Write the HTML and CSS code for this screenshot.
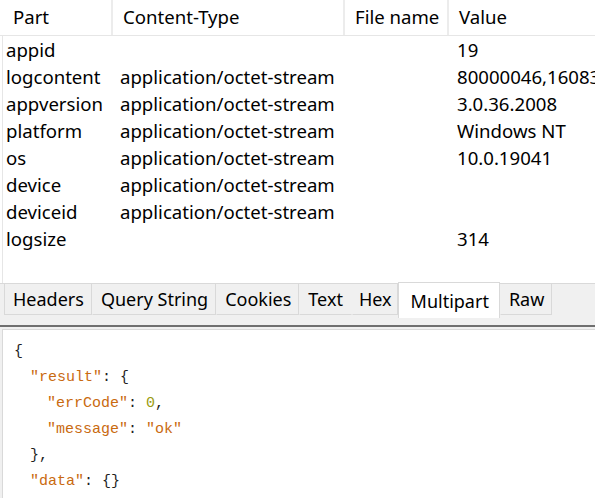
FILE: index.html
```html
<!DOCTYPE html>
<html>
<head>
<meta charset="utf-8">
<link rel="stylesheet" href="styles.css">
</head>
<body>
<div class="grid">
  <div class="row head">
    <div class="c c1">Part</div>
    <div class="c c2">Content-Type</div>
    <div class="c c3">File name</div>
    <div class="c c4">Value</div>
  </div>
  <div class="rows">
    <div class="row"><div class="c c1">appid</div><div class="c c2"></div><div class="c c3"></div><div class="c c4">19</div></div>
    <div class="row"><div class="c c1">logcontent</div><div class="c c2">application/octet-stream</div><div class="c c3"></div><div class="c c4">80000046,16083</div></div>
    <div class="row"><div class="c c1">appversion</div><div class="c c2">application/octet-stream</div><div class="c c3"></div><div class="c c4">3.0.36.2008</div></div>
    <div class="row"><div class="c c1">platform</div><div class="c c2">application/octet-stream</div><div class="c c3"></div><div class="c c4">Windows NT</div></div>
    <div class="row"><div class="c c1">os</div><div class="c c2">application/octet-stream</div><div class="c c3"></div><div class="c c4">10.0.19041</div></div>
    <div class="row"><div class="c c1">device</div><div class="c c2">application/octet-stream</div><div class="c c3"></div><div class="c c4"></div></div>
    <div class="row"><div class="c c1">deviceid</div><div class="c c2">application/octet-stream</div><div class="c c3"></div><div class="c c4"></div></div>
    <div class="row"><div class="c c1">logsize</div><div class="c c2"></div><div class="c c3"></div><div class="c c4">314</div></div>
  </div>
</div>
<div class="tabstrip">
  <div class="tab">Headers</div>
  <div class="tab">Query String</div>
  <div class="tab">Cookies</div>
  <div class="tab nodiv">Text</div>
  <div class="tab hex">Hex</div>
  <div class="tab active">Multipart</div>
  <div class="tab">Raw</div>
</div>
<div class="splitter"></div>
<div class="code"><div class="ln"><span class="p">{</span></div><div class="ln i1"><span class="k">"result"</span><span class="p">: {</span></div><div class="ln i2"><span class="k">"errCode"</span><span class="p">: </span><span class="n">0</span><span class="p">,</span></div><div class="ln i2"><span class="k">"message"</span><span class="p">: </span><span class="k">"ok"</span></div><div class="ln i1"><span class="p">},</span></div><div class="ln i1"><span class="k">"data"</span><span class="p">: {}</span></div></div>
</body>
</html>
```
FILE: styles.css
```css
html, body {
  margin: 0;
  padding: 0;
  background: #f0f0f0;
  overflow: hidden;
}
body {
  width: 595px;
  height: 498px;
  font-family: "Noto Sans", "Liberation Sans", sans-serif;
  color: #000;
}
.grid {
  height: 283px;
  background: #fff;
  border-bottom: 1px solid #d9d9d9;
  overflow: hidden;
}
.row {
  display: grid;
  grid-template-columns: 113px 232px 104px 146px;
  height: 27px;
  font-size: 18.6px;
  line-height: 27px;
  white-space: nowrap;
}
.c {
  overflow: hidden;
}
.head {
  height: 35px;
  line-height: 34px;
  border-bottom: 1px solid #e6e6e6;
}
.head .c {
  padding-left: 10px;
  border-right: 2px solid #ececec;
}
.head .c1 {
  padding-left: 13px;
}
.head .c4 {
  border-right: none;
}
.rows {
  height: 247px;
  margin-left: 2px;
  border-left: 1px solid #e6e6e6;
}
.rows .row {
  grid-template-columns: 110px 232px 104px 146px;
}
.rows .c1 { padding-left: 3px; }
.rows .c2 { padding-left: 7px; }
.rows .c4 { padding-left: 8px; }

.tabstrip {
  display: flex;
  align-items: flex-start;
  height: 41px;
  padding-left: 4px;
  background: #f0f0f0;
}
.tab {
  height: 31px;
  line-height: 30px;
  font-size: 18px;
  padding: 0 7px 0 8px;
  border: 1px solid #d9d9d9;
  border-top: none;
  border-left-color: transparent;
  background: #f0f0f0;
  box-sizing: border-box;
  white-space: nowrap;
}
.tab:first-child {
  border-left-color: #d9d9d9;
}
.tab.nodiv {
  border-right-color: transparent;
  padding: 0 8px 0 8px;
}
.tab.hex {
  padding: 0 5px 0 6px;
}
.tab.active {
  margin-top: -2px;
  height: 36px;
  line-height: 37px;
  padding: 0 10px 0 12px;
  background: #fff;
  border: 1px solid #d9d9d9;
  border-bottom: none;
}
.splitter {
  height: 2px;
  background: #6f6f6f;
}
.code {
  margin: 2px 0 0 2px;
  height: 170px;
  box-sizing: border-box;
  background: #fff;
  border-top: 1px solid #d9d9d9;
  border-left: 1px solid #d9d9d9;
  padding: 9px 0 0 11px;
  font-family: "Liberation Mono", "DejaVu Sans Mono", monospace;
  font-size: 15px;
  line-height: 26px;
  white-space: pre;
}
.ln.i1 { padding-left: 16px; }
.ln.i2 { padding-left: 33px; }
.k { color: #c96a10; }
.p { color: #1f1f1f; }
.n { color: #9a9a10; }
```
